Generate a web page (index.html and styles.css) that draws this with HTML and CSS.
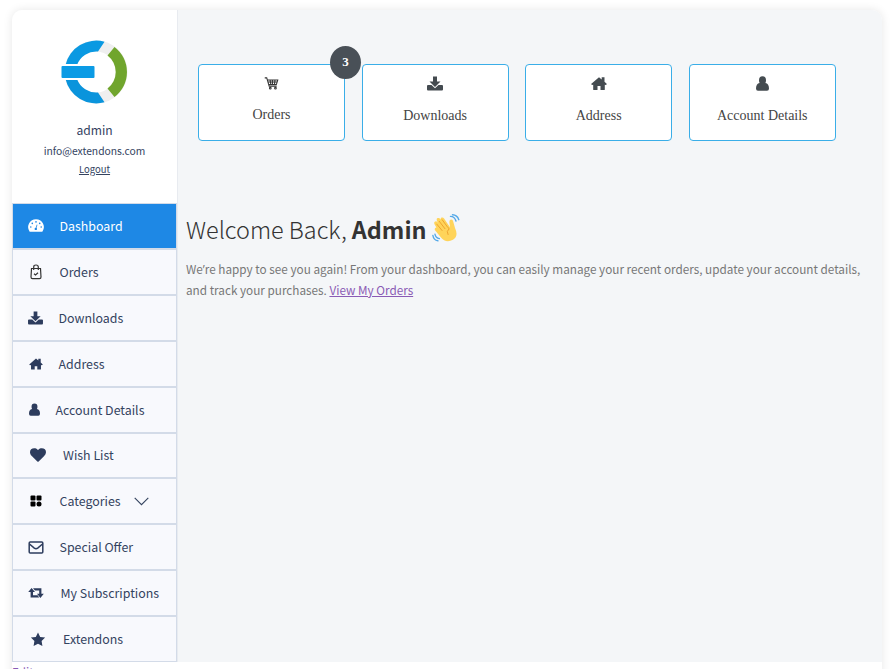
FILE: index.html
```html
<!DOCTYPE html>
<html lang="en">
<head>
<meta charset="utf-8">
<title>My Account</title>
<link rel="stylesheet" href="styles.css">
</head>
<body>
<svg class="defs" width="0" height="0" aria-hidden="true">
  <symbol id="download" viewBox="0 0 16 15"><path d="M6 .5h4v5h3.500L8 11 2.500 5.500H6z"/><path d="M1 9h3.500L8 12.300 11.500 9H15q1 0 1 1v3.500q0 1-1 1H1q-1 0-1-1V10q0-1 1-1z"/></symbol>
  <symbol id="home" viewBox="0 0 16 14"><path d="M8 .7 10.700 3V.8h2.800v4.500L15.900 7.500l-.9 1.100-1.200-.4v4.700q0 .6-.6.6H9.500V9.500h-3v4H2.800q-.6 0-.6-.6V8.200L1 8.600.1 7.500z"/></symbol>
  <symbol id="user" viewBox="0 0 13 15"><path d="M3 4.200a3.500 3.900 0 0 1 7 0q0 1.600-.6 2.700Q13 7.500 13 12.500q0 2.300-2 2.300H2q-2 0-2-2.300Q0 7.500 3.600 6.900 3 5.800 3 4.200z"/></symbol>
</svg>
<div class="page">
<div class="account">
  <aside class="sidebar">
    <div class="profile">
      <svg class="logo" width="68" height="66" viewBox="0 0 68 66">
        <circle cx="35" cy="33" r="26" fill="none" stroke="#efefef" stroke-width="11"/>
        <path d="M43.500 2.700A31.500 31.500 0 0 0 4.500 26H16A20.500 20.500 0 0 1 37 12.500z" fill="#0a99e2"/>
        <path d="M43.500 63.300A31.500 31.500 0 0 1 4.500 40H16A20.500 20.500 0 0 0 37 53.500z" fill="#0a94dc"/>
        <path d="M53.500 8A31.300 31.300 0 0 1 53.500 58L46.500 49.500A20.700 20.700 0 0 0 46.500 16.500z" fill="#70a52d"/>
        <path d="M0 25h34v16H0z" fill="#fff"/>
        <rect x=".5" y="27" width="33" height="12" rx="1" fill="#0b9be5"/>
      </svg>
      <div class="name">admin</div>
      <div class="email">info@extendons.com</div>
      <a class="logout">Logout</a>
    </div>
    <nav class="menu">
      <a class="item active"><svg class="icon" width="16" height="13" viewBox="0 0 16 13"><path d="M8 .2a7.800 7.800 0 0 0-6.600 12q.3.500.9.500h11.400q.6 0 .9-.5A7.800 7.800 0 0 0 8 .2z" fill="#fff"/><g fill="#1e88e5"><circle cx="2.800" cy="8" r=".8"/><circle cx="4.300" cy="4.400" r=".8"/><circle cx="8" cy="2.900" r=".8"/><circle cx="11.700" cy="4.400" r=".8"/><circle cx="13.200" cy="8" r=".8"/><circle cx="7.800" cy="9.900" r="1.200"/></g><path d="m8 9.500 1-3.800" stroke="#1e88e5" stroke-width=".8"/></svg><span>Dashboard</span></a>
      <a class="item orders"><svg class="icon line" width="16" height="16" viewBox="0 0 16 16" stroke="#333" stroke-width="1.200"><path d="M3.500 4.500h9l.5 8.500q0 1.700-1.500 1.700h-7q-1.500 0-1.500-1.700zM5.700 6V3q0-2 2.300-2t2.300 2v3M6 9.700l1.500 1.200L10 8.800"/></svg><span>Orders</span></a>
      <a class="item downloads"><svg class="icon" width="15" height="14"><use href="#download"/></svg><span>Downloads</span></a>
      <a class="item address"><svg class="icon" width="14" height="12"><use href="#home"/></svg><span>Address</span></a>
      <a class="item details"><svg class="icon" width="11" height="13"><use href="#user"/></svg><span>Account Details</span></a>
      <a class="item wish"><svg class="icon" width="16" height="16" viewBox="0 0 1792 1792"><path d="M896 1664q-26 0-44-18l-624-602q-10-8-27.500-26t-55.500-65.500-68-97.500-53.500-121-23.500-138q0-220 127-344t351-124q62 0 126.500 21.500t120 58 95.500 68.500 76 68q36-36 76-68t95.500-68.500 120-58 126.500-21.500q224 0 351 124t127 344q0 221-229 450l-623 600q-18 18-44 18z"/></svg><span>Wish List</span></a>
      <a class="item categories"><svg class="icon black" width="16" height="12" viewBox="0 0 16 12"><rect x="2.500" y=".5" width="5" height="5" rx="1"/><rect x="8.500" y=".5" width="5" height="5" rx="1"/><rect x="2.500" y="6.500" width="5" height="5" rx="1"/><circle cx="11" cy="9" r="2.500"/></svg><span>Categories</span><svg class="chevron" width="15" height="9" viewBox="0 0 15 9" fill="none" stroke="#34435f" stroke-width="1.100"><path d="m.7.900 6.800 6.800L14.300.900"/></svg></a>
      <a class="item offer"><svg class="icon line" width="16" height="13" viewBox="0 0 16 13" stroke="#2d3c5d" stroke-width="1.500"><rect x="1.200" y=".9" width="13.600" height="11.200" rx="1"/><path d="m1.500 3 4.800 4.100q1.700 1.300 3.400 0L14.500 3"/></svg><span>Special Offer</span></a>
      <a class="item subs"><svg class="icon" width="16" height="12" viewBox="0 0 16 12"><path d="M3.600 1 7 5H5v3.200h4.600l1.600 2.200H2.600V5H.2zM5 1.200h8.400v5.600h2.400L12.400 10.900 9 6.800h2.200V3.500H6.900z"/></svg><span>My Subscriptions</span></a>
      <a class="item ext"><svg class="icon" width="16" height="15" viewBox="0 0 16 15"><path d="m8 .5 2.200 4.400 4.900.7-3.500 3.500.8 4.900L8 11.700 3.600 14l.8-4.900L.9 5.600l4.900-.7z"/></svg><span>Extendons</span></a>
    </nav>
  </aside>
  <main class="content">
    <div class="cards">
      <a class="card cart"><svg width="15" height="13" viewBox="0 0 16 14" fill="none" stroke="#333" stroke-width="1.100"><path d="M.8 1h2.100l2.600 8.800h8M3.500 3.200h11.200l-1.500 4.900H5M6.500 3.200l.8 5M9 3.200v5M11.700 3.200l-.5 5M4.200 5.500H14"/><circle cx="6.700" cy="12" r=".9"/><circle cx="12.200" cy="12" r=".9"/></svg><span>Orders</span><b class="badge">3</b></a>
      <a class="card"><svg width="16" height="15"><use href="#download"/></svg><span>Downloads</span></a>
      <a class="card"><svg width="16" height="14"><use href="#home"/></svg><span>Address</span></a>
      <a class="card"><svg width="13" height="15"><use href="#user"/></svg><span>Account Details</span></a>
    </div>
    <h1><span>Welcome Back,</span> <strong>Admin</strong><svg class="wave" width="28" height="28" viewBox="0 0 28 28"><path d="M2.500 10.200q-.9-2 .7-2.700 1.300-.5 2.200.7l.5.600-1-2.100q-.7-1.900.8-2.600t2.600 1l.6.800q-.6-1.600.7-2.300t2.500 1l5.900 8.600-.6-4.900q-.3-2.900 1.900-2.900 1.500 0 1.900 2l1.900 6.900q3.700 8-2.100 11.500-7.200 3.700-12.200-2.500L3.200 16.500q-1.100-1.800.4-2.700l.8-.3z" fill="#ffd45a"/><path d="m4.500 9.800 5.800 7M7 7l6.200 8M10 5.500l6 8.200 1.200 1q-3.300 2.500-1 6.200" fill="none" stroke="#eea42f" stroke-width="1"/><path d="M18.500 2.400q4 .1 5.500 4.600M20.500.8q4.700.2 6.300 4.900M3 20.300q.8 3.700 4.400 4.300M.9 21.500q.7 4.700 5 5.300" fill="none" stroke="#55a9e8" stroke-width="1.400" stroke-linecap="round"/></svg></h1>
    <p>We<span class="apos">’</span>re happy to see you again! From your dashboard, you can easily manage your recent orders, update your account details, <br>and track your purchases. <a>View My Orders</a></p>
  </main>
</div>
<a class="edit">Edit</a>
</div>
</body>
</html>
```
FILE: styles.css
```css
* { box-sizing: border-box; }
html { overflow: hidden; }
body {
  margin: 0;
  padding: 10px 13px 0 12px;
  height: 669px;
  overflow: hidden;
  background: #fff;
  color: #34435f;
  font-family: "Noto Sans CJK SC", "Noto Sans", sans-serif;
}
.defs { position: absolute; }
.page {
  height: 700px;
  border-radius: 10px;
  background: #fff;
  box-shadow: 0 0 10px rgba(0, 0, 0, .1);
}
.account {
  display: flex;
  height: 652px;
  border-radius: 10px 10px 0 0;
  background: #f4f6f8;
}
.sidebar {
  display: flex;
  flex: none;
  flex-direction: column;
  width: 166px;
  background: #fff;
  border-right: 1px solid #e8ebf0;
  border-radius: 10px 0 0 0;
}
.profile {
  display: flex;
  flex-direction: column;
  align-items: center;
  height: 193px;
  padding-top: 29px;
}
.name { margin-top: 14px; font-size: 12.100px; line-height: 22px; }
.email { font-size: 10.300px; line-height: 19px; }
.logout { font-size: 9.500px; line-height: 18px; text-decoration: underline; }
.menu {
  display: grid;
  grid-template-rows: repeat(10, 1fr);
  height: 459px;
}
.item {
  display: flex;
  align-items: center;
  gap: 15.500px;
  padding-left: 15px;
  border: 1px solid #d3dbe8;
  background: #f8f9fd;
  font-size: 12.400px;
  line-height: 20px;
  white-space: nowrap;
}
.icon { flex: none; fill: #2d3c5d; }
.icon.line { fill: none; }
.icon.black { fill: #000; }
.item.active { background: #1e88e5; color: #fff; }
.address { padding-left: 16px; }
.details { padding-left: 15.500px; gap: 16px; }
.wish, .ext { padding-left: 17px; gap: 17px; }
.subs { gap: 16.500px; }
.chevron { margin-left: -2px; }
.content { flex: 1; padding: 54px 0 0 8px; }
.cards {
  display: grid;
  grid-template-columns: repeat(4, 147px);
  column-gap: 16.600px;
  padding-left: 12px;
}
.card {
  position: relative;
  display: flex;
  flex-direction: column;
  align-items: center;
  height: 77px;
  padding-top: 11px;
  border: 1px solid #3aaee8;
  border-radius: 4px;
  background: #fff;
  color: #444;
  fill: #444b50;
  font: 14px/18px "Liberation Serif", serif;
}
.card svg { height: 15px; }
.card span { margin-top: 16px; }
.cart span { margin-top: 15px; }
.badge {
  position: absolute;
  top: -19px;
  right: -17px;
  width: 31px;
  height: 33px;
  border-radius: 50%;
  background: #495057;
  color: #fff;
  font-size: 13px;
  line-height: 32px;
  text-align: center;
}
h1 {
  display: flex;
  align-items: center;
  margin: 70px 0 0;
  color: #333;
  font-size: 23.400px;
  font-weight: 300;
  line-height: 36px;
  white-space: pre;
}
h1 strong { margin-left: 5px; font-weight: 700; }
.wave { margin: -3px 0 0 5px; }
p {
  margin: 11px 0 0;
  color: #777;
  font-size: 11.740px;
  line-height: 21px;
  white-space: nowrap;
}
.apos { font-family: "Open Sans", sans-serif; line-height: 1; }
p a { color: #8a5bb5; text-decoration: underline; }
.edit {
  display: block;
  color: #8a5bb5;
  font-size: 11.700px;
  line-height: 19px;
}
```
